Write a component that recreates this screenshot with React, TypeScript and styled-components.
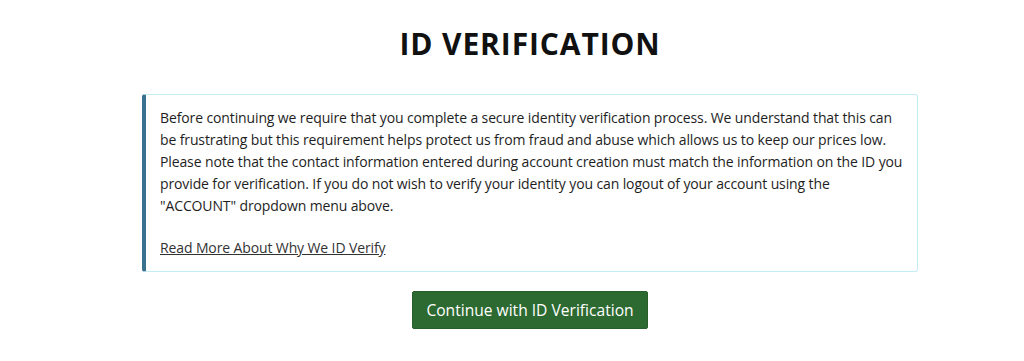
import React from "react";
import styled, { createGlobalStyle } from "styled-components";

const Global = createGlobalStyle`
  html, body { margin: 0; padding: 0; background: #fff; }
  body { font-family: "Open Sans", "Noto Sans", sans-serif; color: #212529; }
`;

const Page = styled.main`
  display: flex;
  flex-direction: column;
  align-items: center;
  padding: 24px 0 0 36px;
`;

const Title = styled.h1`
  margin: 0 0 30px;
  font-size: 30px;
  font-weight: 700;
  letter-spacing: 0.9px;
  line-height: 40px;
  color: #111;
`;

const Notice = styled.section`
  box-sizing: border-box;
  width: 776px;
  border: 1px solid #c4ecf3;
  border-left: 4px solid #3a7090;
  border-radius: 3px;
  padding: 12px 10px 12px 14px;
  font-size: 14px;
  letter-spacing: -0.12px;
  line-height: 22px;
  color: #1e1e1e;
`;

const Para = styled.p`
  margin: 0 0 20px;
  &:last-child { margin-bottom: 0; }
`;

const MoreLink = styled.a`
  color: #333;
  text-decoration: underline;
`;

const Button = styled.button`
  margin-top: 19px;
  height: 38px;
  padding: 0 13px;
  background: #2d6a31;
  color: #fff;
  border: 1px solid #285e2b;
  border-radius: 2px;
  font-family: inherit;
  font-size: 15.6px;
  cursor: pointer;
`;

export default function App() {
  return (
    <>
      <Global />
      <Page>
        <Title>ID VERIFICATION</Title>
        <Notice>
          <Para>
            Before continuing we require that you complete a secure identity verification process. We understand that this can
            be frustrating but this requirement helps protect us from fraud and abuse which allows us to keep our prices low.
            Please note that the contact information entered during account creation must match the information on the ID you
            provide for verification. If you do not wish to verify your identity you can logout of your account using the
            "ACCOUNT" dropdown menu above.
          </Para>
          <Para>
            <MoreLink href="#">Read More About Why We ID Verify</MoreLink>
          </Para>
        </Notice>
        <Button>Continue with ID Verification</Button>
      </Page>
    </>
  );
}
